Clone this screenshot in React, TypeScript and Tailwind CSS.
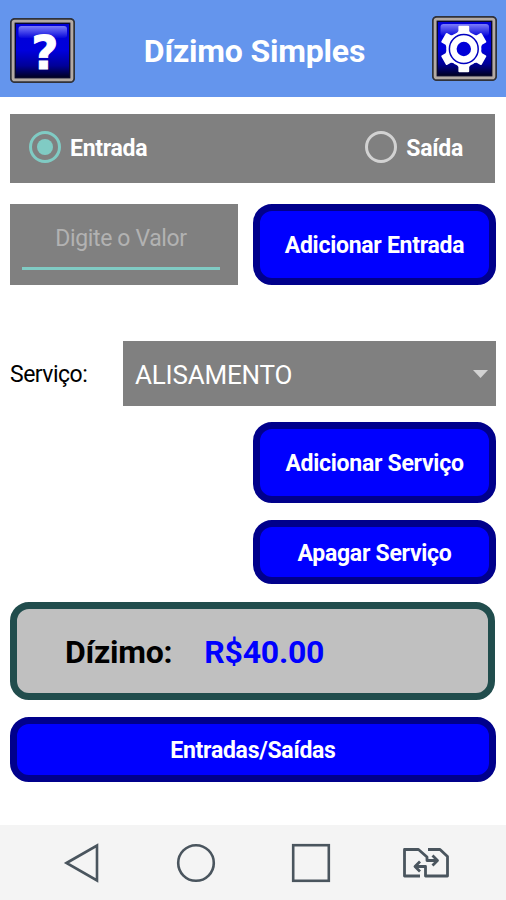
import React, { useState } from 'react';
import clsx from 'clsx';

type Mode = 'entrada' | 'saida';

// Glossy bevelled frame shared by both header icons
const GlossyFrame: React.FC<{ id: string; children: React.ReactNode }> = ({ id, children }) => (
  <svg viewBox="0 0 65 65" className="block w-[65px] h-[65px]">
    <defs>
      <linearGradient id={`${id}-fill`} x1="0" y1="0" x2="0" y2="1">
        <stop offset="0" stopColor="#0000d8" />
        <stop offset="0.5" stopColor="#0000dc" />
        <stop offset="0.78" stopColor="#000098" />
        <stop offset="1" stopColor="#000020" />
      </linearGradient>
      <linearGradient id={`${id}-shine`} x1="0" y1="0" x2="0" y2="1">
        <stop offset="0" stopColor="#7c7cfa" />
        <stop offset="1" stopColor="#0808dc" />
      </linearGradient>
    </defs>
    <rect x="0.8" y="0.8" width="63.4" height="63.4" rx="4" fill="#b3aaa4" stroke="#30323a" strokeWidth="1.8" />
    <rect x="5.3" y="5.3" width="54.4" height="54.4" fill={`url(#${id}-fill)`} stroke="#08082c" strokeWidth="1.4" />
    <rect x="8.5" y="8" width="48.5" height="12" rx="3" fill={`url(#${id}-shine)`} />
    {children}
  </svg>
);

const HelpIcon = () => (
  <GlossyFrame id="help">
    <text
      x="34.8"
      y="51"
      textAnchor="middle"
      fontSize="47"
      fontWeight="700"
      fill="#fff"
      stroke="#fff"
      strokeWidth="0.9"
      fontFamily="'DejaVu Sans', sans-serif"
    >
      ?
    </text>
  </GlossyFrame>
);

const GearIcon = () => (
  <GlossyFrame id="gear">
    <g transform="translate(31.8 33)">
      {[0, 60, 120, 180, 240, 300].map(angle => (
        <path
          key={angle}
          d="M-7.4 -15 L-5.4 -18 V-22.5 Q-5.2 -23.3 -4.4 -23.3 H4.4 Q5.2 -23.3 5.4 -22.5 V-18 L7.4 -15 Z"
          fill="#fff"
          transform={`rotate(${angle})`}
        />
      ))}
      <circle r="17.6" fill="#fff" />
      <circle r="14.4" fill="none" stroke="#0000c0" strokeWidth="1.5" />
      <circle r="7.2" fill="#0000d8" />
    </g>
  </GlossyFrame>
);

const Radio: React.FC<{ label: string; checked: boolean; onSelect: () => void }> = ({ label, checked, onSelect }) => (
  <button type="button" role="radio" aria-checked={checked} onClick={onSelect} className="flex items-center gap-[9px]">
    <span
      className={clsx(
        'flex h-8 w-8 items-center justify-center rounded-full border-[3px]',
        checked ? 'border-[#80cbc4]' : 'border-[#d2d2d2]',
      )}
    >
      {checked && <span className="h-4 w-4 rounded-full bg-[#80cbc4]" />}
    </span>
    <span className="pt-0.5 text-[23px] font-bold leading-none tracking-[-0.27px]">{label}</span>
  </button>
);

const ActionButton: React.FC<{ className?: string; children: React.ReactNode }> = ({ className, children }) => (
  <button
    type="button"
    className={clsx(
      'flex items-center justify-center whitespace-nowrap rounded-[19px] border-[7px] border-[#00008b] bg-[#0000ff] pt-0.5 text-[23px] font-bold leading-none tracking-[-0.27px] text-white',
      className,
    )}
  >
    {children}
  </button>
);

export default function App() {
  const [mode, setMode] = useState<Mode>('entrada');

  return (
    <div className="flex h-[900px] w-[506px] flex-col overflow-hidden bg-white font-['Roboto',sans-serif] text-black">
      {/* Header */}
      <header className="flex h-[97px] shrink-0 items-start justify-between bg-[#6495ed] pl-[10px] pr-[9px]">
        <button type="button" aria-label="Ajuda" className="mt-[18px]">
          <HelpIcon />
        </button>
        <h1 className="mt-[34px] pl-0.5 text-[32px] font-bold leading-[34px] tracking-[-0.2px] text-white">Dízimo Simples</h1>
        <button type="button" aria-label="Configurações" className="mt-4">
          <GearIcon />
        </button>
      </header>

      <main className="flex flex-1 flex-col pl-[10px] pr-[10px]">
        {/* Entry type */}
        <div
          role="radiogroup"
          className="mt-[17px] mr-px flex h-[69px] items-center justify-between bg-[#808080] pb-[3px] pl-[19px] pr-8 text-white"
        >
          <Radio label="Entrada" checked={mode === 'entrada'} onSelect={() => setMode('entrada')} />
          <Radio label="Saída" checked={mode === 'saida'} onSelect={() => setMode('saida')} />
        </div>

        {/* Amount */}
        <div className="mt-[21px] flex h-[81px] justify-between">
          <div className="w-[228px] bg-[#808080] pl-3 pr-[18px] pt-[14px]">
            <input
              type="text"
              placeholder="Digite o Valor"
              className="h-[52px] w-full border-b-[3px] border-[#80cbc4] bg-transparent pb-2 text-center text-[23px] tracking-[-0.37px] text-white outline-none placeholder:text-[#b2b2b2]"
            />
          </div>
          <ActionButton className="w-[243px]">Adicionar Entrada</ActionButton>
        </div>

        {/* Service */}
        <div className="mt-14 flex h-[65px] items-center justify-between">
          <span className="pt-0.5 text-[23px] leading-none tracking-[-0.5px]">Serviço:</span>
          <button
            type="button"
            className="flex h-full w-[373px] items-center justify-between bg-[#808080] pl-3 pr-2 text-[26px] leading-none tracking-[-0.2px] text-white"
          >
            <span className="pt-0.5">ALISAMENTO</span>
            <svg viewBox="0 0 15 8" className="h-2 w-[15px]">
              <path d="M0 0 H15 L7.5 8 Z" fill="#d2d2d2" />
            </svg>
          </button>
        </div>
        <div className="mt-4 flex flex-col items-end gap-[17px]">
          <ActionButton className="h-[81px] w-[243px]">Adicionar Serviço</ActionButton>
          <ActionButton className="h-16 w-[243px]">Apagar Serviço</ActionButton>
        </div>

        {/* Total */}
        <div className="mt-[18px] mr-px flex h-[98px] items-center gap-8 rounded-[19px] border-[7px] border-[#214d4d] bg-[#c0c0c0] pl-12 pt-0.5 text-[32px] font-bold leading-none tracking-[-0.25px]">
          <span>Dízimo:</span>
          <span className="text-[#0000ff]">R$40.00</span>
        </div>
        <ActionButton className="mt-[17px] h-[65px] w-full">Entradas/Saídas</ActionButton>
      </main>

      {/* System navigation bar */}
      <nav className="h-[75px] shrink-0 bg-[#f4f4f4]">
        <svg viewBox="0 0 506 75" className="block h-full w-full" fill="none" stroke="#4a555e" strokeWidth="2.6">
          <path d="M66.5 38 L97 20.5 V55.5 Z" />
          <circle cx="196" cy="38" r="17.8" />
          <rect x="293.2" y="20.2" width="35.6" height="35.6" />
          <g strokeWidth="2.8" strokeLinejoin="round">
            <path d="M420 51 H404.5 V24.5 H418.5 L427 32 V35.5 H437" />
            <path d="M432.5 30.5 L437.5 35.5 L432.5 40.5" />
            <path d="M428 24.5 H440 L447.5 31.5 V51 H425.5 V41.5 H415" />
            <path d="M420 36.5 L415 41.5 L420 46.5" />
          </g>
        </svg>
      </nav>
    </div>
  );
}
